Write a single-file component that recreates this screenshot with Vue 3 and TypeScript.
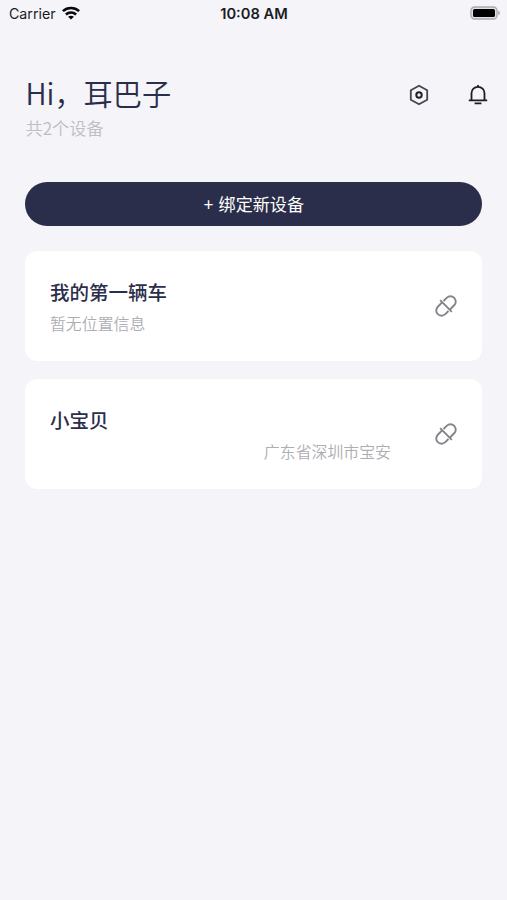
<script setup lang="ts">
interface Device {
  id: number
  name: string
  location: string
  scrolling: boolean
}

const userName = '耳巴子'
const devices: Device[] = [
  { id: 1, name: '我的第一辆车', location: '暂无位置信息', scrolling: false },
  { id: 2, name: '小宝贝', location: '广东省深圳市宝安', scrolling: true },
]
</script>

<template>
  <main class="screen">
    <div class="status">
      <div class="carrier">
        <span>Carrier</span>
        <svg class="wifi" width="18" height="14" viewBox="0 0 18 14" fill="none" stroke="#08080a" stroke-width="2.6">
          <path d="M.9 5.1C5.5 .9 12.5 .9 17.1 5.1" />
          <path d="M3.9 8.5c2.9-2.6 7.3-2.6 10.2 0" />
          <path d="M9 13.6 6.1 10.8c1.6-1.4 4.2-1.4 5.8 0z" fill="#08080a" stroke="none" />
        </svg>
      </div>
      <span class="time">10:08 AM</span>
      <svg class="battery" width="31" height="14" viewBox="0 0 31 14">
        <rect x="1" y="1" width="26" height="12" rx="3.6" fill="#e0e0e5" stroke="#a9a9ae" stroke-width="1.3" />
        <rect x="3" y="3" width="22" height="8" rx="1.6" fill="#000" />
        <path d="M28.2 4.8c2.3.7 2.3 3.7 0 4.4z" fill="#a9a9ae" />
      </svg>
    </div>

    <header class="header">
      <div>
        <h1 class="greeting">Hi，{{ userName }}</h1>
        <p class="count">共{{ devices.length }}个设备</p>
      </div>
      <nav class="actions">
        <svg width="22" height="22" viewBox="0 0 22 22" fill="none" stroke-linejoin="round">
          <path d="M11 1.7 19.2 6.2V15.8L11 20.3 2.8 15.8V6.2z" stroke="#444552" stroke-width="1.8" />
          <circle cx="11" cy="11" r="2.7" stroke="#202027" stroke-width="2" />
        </svg>
        <svg width="22" height="22" viewBox="0 0 22 22" fill="none" stroke="#1d1d22" stroke-width="1.8">
          <path d="M4.5 16.3V9.3a6.5 6.5 0 0 1 13 0v7M1.8 16.4h18.4M11 .9v2M7.6 19.4h6.8" />
        </svg>
      </nav>
    </header>

    <button class="bind" type="button">+ 绑定新设备</button>

    <section class="list">
      <article v-for="device in devices" :key="device.id" class="card">
        <div class="info">
          <h2 class="name">{{ device.name }}</h2>
          <p class="location" :class="{ scrolling: device.scrolling }">{{ device.location }}</p>
        </div>
        <svg class="link" width="24" height="24" viewBox="0 0 24 24" fill="none" stroke="#83848d" stroke-width="1.9">
          <g transform="translate(12 12) rotate(-45)">
            <path d="M1.8 -5.3H6.3a5.3 5.3 0 0 1 0 10.6H0" />
            <path d="M0 -5.3H-6.3a5.3 5.3 0 0 0 0 10.6H-1.8" />
            <path d="M0 -8.2V8.2" />
          </g>
        </svg>
      </article>
    </section>
  </main>
</template>

<style>
body {
  background: #f4f4f9;
}
</style>

<style scoped>
.screen {
  box-sizing: border-box;
  min-height: 900px;
  background: #f4f4f9;
  color: #2b2e4a;
  font-family: "Noto Sans CJK SC", sans-serif;
}
.status {
  display: grid;
  grid-template-columns: 1fr auto 1fr;
  align-items: center;
  height: 28px;
  padding: 0 6px 0 9px;
  color: #1b1b1f;
  font: 14.5px/28px Inter, sans-serif;
}
.carrier {
  display: flex;
  align-items: center;
  gap: 6px;
  font-size: 14.2px;
}
.wifi {
  margin-top: -2px;
}
.time {
  margin-left: -2px;
  font-size: 14.7px;
  font-weight: 600;
}
.battery {
  justify-self: end;
  margin-top: -2px;
}
.header {
  display: flex;
  justify-content: space-between;
  padding: 46px 18px 0 25.5px;
}
.greeting {
  margin: 0;
  font-size: 29.2px;
  font-weight: 350;
  line-height: 36px;
}
.count {
  margin: 5px 0 0;
  color: #bebec5;
  font-size: 17.2px;
  font-weight: 350;
  line-height: 25px;
}
.actions {
  display: flex;
  gap: 37px;
  padding-top: 10px;
}
.bind {
  display: block;
  width: 457px;
  height: 44px;
  margin: 42px 0 0 25.4px;
  padding: 0;
  border: 0;
  border-radius: 22px;
  background: #2b2e4a;
  color: #fff;
  font: 400 17.1px/44px "Noto Sans CJK SC", sans-serif;
  word-spacing: 1.5px;
}
.list {
  display: flex;
  flex-direction: column;
  gap: 18px;
  padding: 25.4px 24.6px 0 25.4px;
}
.card {
  box-sizing: border-box;
  display: flex;
  align-items: center;
  justify-content: space-between;
  height: 110px;
  padding: 0 24.5px 0 24.6px;
  border-radius: 12px;
  background: #fff;
}
.info {
  width: 341px;
  padding-top: 2px;
}
.name {
  margin: 0;
  font-size: 19.5px;
  font-weight: 500;
  line-height: 30px;
}
.location {
  margin: 4px 0 0;
  color: #adaeb4;
  font-size: 15.9px;
  font-weight: 350;
  line-height: 26px;
}
.scrolling {
  text-align: right;
}
</style>
